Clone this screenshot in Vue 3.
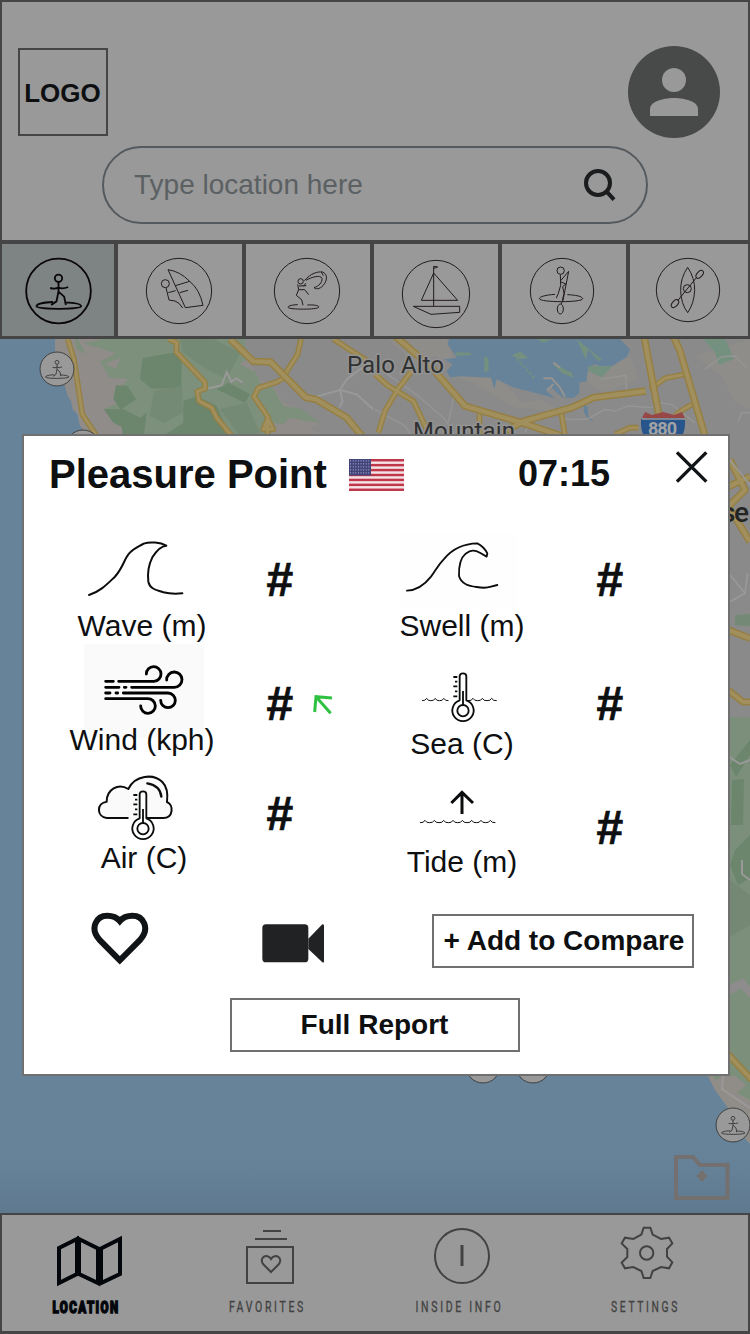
<script setup>
const left = [
  { id: 'wave', label: 'Wave (m)', box: '24 534 236 75', h: 75, row: 110, top: 19 },
  { id: 'wind', label: 'Wind (kph)', box: '24 644 236 79', h: 79, row: 126, top: 33 },
  { id: 'air', label: 'Air (C)', box: '24 770 236 71', h: 71, row: 110, top: 17 }
]
const right = [
  { id: 'swell', label: 'Swell (m)', box: '374 534 176 75', h: 75, row: 110, top: 19 },
  { id: 'sea', label: 'Sea (C)', box: '374 644 176 83', h: 83, row: 126, top: 33 },
  { id: 'tide', label: 'Tide (m)', box: '374 770 176 75', h: 75, row: 110, top: 31 }
]
const stripes = [0, 2, 4, 6, 8, 10, 12]
const stars = Array.from({ length: 40 }, (_, i) => ({ x: 1.6 + (i % 8) * 2.6, y: 1.8 + Math.floor(i / 8) * 3 }))
const ripple = (n) => 'M0 9 ' + Array.from({ length: n }, () => 'q10 1 14 -7 q4 8 14 7').join(' ')
</script>

<template>
  <div class="screen">
    <svg class="defs" width="0" height="0">
      <symbol id="surfer" viewBox="0 0 200 200" overflow="visible">
        <circle cx="100" cy="100" r="97" />
        <circle cx="100" cy="62" r="11" />
        <path d="M100 73V102M75 91Q90 95 100 90Q113 95 129 88M100 101L94 131L78 142M100 102L117 117L122 142M84 133C58 134 34 139 34 146C34 156 168 156 168 146C168 139 145 135 119 134" />
      </symbol>
      <symbol id="thermometer" viewBox="0 0 80 160" overflow="visible">
        <path d="M25 86V14Q25 5 35 5Q45 5 45 14V86A32 32 0 1 1 25 86Z" />
        <circle cx="35" cy="117" r="17" />
        <path d="M35 58V101M6 16H18M11 30H18M6 44H18M11 59H18M6 74H18" />
      </symbol>
    </svg>

    <header class="header">
      <div class="top-row">
        <div class="logo">LOGO</div>
        <svg class="avatar" viewBox="0 0 92 92">
          <circle cx="46" cy="46" r="46" fill="#484949" />
          <circle cx="46" cy="34" r="12" fill="#999" />
          <path d="M22 70V63C22 56 34 52 46 52S70 56 70 63V70Z" fill="#999" />
        </svg>
      </div>
      <div class="search">
        <span>Type location here</span>
        <svg width="32" height="32" viewBox="0 0 96 96" fill="none" stroke="#1b1c1d" stroke-width="12">
          <circle cx="42" cy="42" r="36" /><path d="M68 68L90 92" />
        </svg>
      </div>
    </header>

    <nav class="tabs">
      <div class="tab first active">
        <svg viewBox="6 24 336 276" fill="none" stroke="#0a0708" stroke-width="5.500">
          <use href="#surfer" x="75.500" y="65" width="200" height="200" />
        </svg>
      </div>
      <div class="tab">
        <svg viewBox="354 24 372 276" fill="none" stroke="#231c1e" stroke-width="3">
          <circle cx="537" cy="165" r="98" />
          <circle cx="496" cy="143" r="12" />
          <path d="M504 101L556 215L609 208Q599 160 569 136Q540 106 504 101ZM526 149L569 136M498 155L507 192L525 195Q539 200 548 216M505 170L527 164M539 170L564 163" />
        </svg>
      </div>
      <div class="tab">
        <svg viewBox="738 24 372 276" fill="none" stroke="#231c1e" stroke-width="3">
          <circle cx="921" cy="165" r="98" />
          <circle cx="902" cy="136" r="8" />
          <path d="M913 134C932 112 953 106 968 108C984 115 982 134 969 149C959 160 946 160 942 155C957 150 967 140 966 127C961 115 933 124 918 133M964 108L970 119M893 145L896 161H914L926 176M897 150L919 149M896 161L889 178L905 191L909 208M917 142L911 151M893 206C870 207 864 211 864 214C866 221 954 222 957 213C955 208 942 206 922 207" />
        </svg>
      </div>
      <div class="tab">
        <svg viewBox="-3 24 372 276" fill="none" stroke="#231c1e" stroke-width="3">
          <circle cx="183" cy="174" r="101" />
          <path d="M176 211V91L188 93L176 97M176 111L139 193H248ZM115 211H254V229L168 235Z" />
        </svg>
      </div>
      <div class="tab">
        <svg viewBox="381 24 372 276" fill="none" stroke="#231c1e" stroke-width="3">
          <ellipse cx="561" cy="165" rx="95" ry="98" />
          <circle cx="557" cy="104" r="11" />
          <path d="M556 116L557 148L550 172L544 186M557 134L581 106L564 193M558 138L573 144L563 152L567 172L562 194M540 175C512 177 493 182 493 188C495 200 623 200 623 188C622 181 602 177 577 176" />
          <ellipse cx="556" cy="219" rx="9" ry="15" />
          <path d="M564 193L558 204" />
        </svg>
      </div>
      <div class="tab">
        <svg viewBox="765 24 354 276" fill="none" stroke="#231c1e" stroke-width="3">
          <circle cx="939" cy="162" r="95" />
          <path d="M938 94Q960 126 959 164Q957 203 938 230Q918 203 917 164Q916 126 938 94ZM908 194L965 124" />
          <circle cx="937" cy="158" r="12" />
          <ellipse cx="974" cy="115" rx="8" ry="14" transform="rotate(42 974 115)" />
          <ellipse cx="900" cy="203" rx="8" ry="14" transform="rotate(42 900 203)" />
        </svg>
      </div>
    </nav>

    <svg class="map" viewBox="0 339 750 874" preserveAspectRatio="none">
      <defs>
        <linearGradient id="dusk" x1="0" y1="0" x2="0" y2="1">
          <stop offset="0" stop-color="#607b90" stop-opacity="0" />
          <stop offset="1" stop-color="#5f7a8f" />
        </linearGradient>
      </defs>
      <rect y="339" width="750" height="874" fill="#67839a" />
      <g transform="translate(0 236) scale(.333333)">
        <path fill="#8f8c89" d="M165 309H1200V700H300L280 620L240 570L232 535L218 520L213 495L203 480L195 450L165 400Z" />
        <path fill="#7c907b" d="M225 309H735L742 370L720 385L778 415V440L815 450L850 510L905 518L962 562L870 545L850 565L820 560L780 610H375L312 520L355 500L340 480L365 450L385 430L330 425L300 375L230 340Z" />
        <path fill="#8f8c89" d="M232 309H310L250 322L348 352L304 376L260 356ZM313 382L362 367L346 399ZM345 600L330 548L372 545L385 610Z" />
        <path fill="#6b866c" d="M428 366L520 350L545 365L544 455L455 458L420 430ZM348 448L382 449L408 490L362 521L340 488ZM312 520L370 520L420 545L440 530L430 610H370L365 572L340 560ZM550 495L590 480L650 510L690 600H490L550 560ZM650 460L685 440L750 475L735 500Z" />
        <path fill="#748a74" d="M462 465L545 450L548 530L490 560L450 540ZM540 309H640L720 350L680 430L620 400L550 350ZM660 520L740 500L780 590L720 600Z" />
        <path fill="#8a8a8a" d="M735 309H1200V610H1000L930 580L962 562L905 518L850 500L820 450L778 430L742 365Z" />
        <g fill="none" stroke="#999" stroke-width="6">
          <path d="M620 458L665 448L680 408L694 437L708 427L728 439M945 483L1020 462L1040 430L1120 370M1020 462L1028 495L1018 515M1020 462L1070 475L1125 525" />
        </g>
        <g class="roads">
          <path id="r1" d="M203 309L222 370L247 535L290 600M505 309L530 320L529 348L614 438L616 458L592 466L597 495L635 515L650 545L695 600M903 309L893 355L845 430L830 438L775 456L762 482L805 545L790 580L820 580L803 548L803 600M1000 309L1125 390" />
          <path id="r2" d="M690 309L760 376L812 378L918 485L948 490L1040 545L1090 605" />
        </g>
        <use href="#r1" class="edge" /><use href="#r1" class="core" />
        <use href="#r2" class="edge big" /><use href="#r2" class="core big" />
      </g>
      <g transform="translate(375 236) scale(.333333)">
        <path fill="#8a8a8a" d="M-5 309H1130V2380H-5Z" />
        <path fill="#8f8d8a" d="M40 309H215L235 380L180 360L130 390ZM235 420L350 400L440 500L500 490L600 560L500 520L420 515L300 445ZM635 400L760 340L790 430L690 470L640 440ZM960 360L1125 309V520L1080 500L1040 420Z" />
        <path fill="#67839a" d="M222 309H735L765 340L757 362L712 390L680 394L660 385L640 394L634 436L612 440L614 470L596 486L565 485L545 470L530 455L515 466L540 487L470 468L420 456L365 430L358 460L348 425L260 421L225 424L215 405L233 385L207 370L245 365L228 340L218 325ZM625 505L638 512L640 540L655 558L640 548L627 530Z" />
        <path fill="#74907f" d="M242 349L288 350V358L242 359ZM328 360L340 366L341 403L328 410ZM410 359L435 346L460 366L435 370ZM485 310H532L505 320ZM605 309L680 370L670 376L640 340L632 370ZM640 390L712 390L681 424L640 405ZM530 380L590 410L595 425L560 410ZM985 309H1050L1077 368L1032 388L1020 350Z" />
        <path fill="none" stroke="#74907f" stroke-width="5" stroke-dasharray="9 5" d="M425 368L480 428" />
        <path fill="none" stroke="#95938f" stroke-width="6" d="M505 427H530L555 455L570 483M516 463L535 445M535 380L555 395" />
        <g fill="none" stroke="#969696" stroke-width="4">
          <path d="M30 410L130 480L210 550L240 600M235 487L220 560M0 520L90 570L110 600M565 550H635L690 520L720 525L760 510L830 515L850 500L890 505L960 560M675 430L752 418L755 465M990 400L1040 362L1080 360L1115 395M1090 555L1100 530H1125M450 590L465 560" />
        </g>
        <g id="r3" fill="none">
          <path d="M0 415L40 450L115 495L160 590M110 405L68 460L30 525L10 590M313 535L315 605M558 525L570 600M825 460L870 427L930 415M950 505L910 530L880 560M790 575H765L720 595" />
        </g>
        <use href="#r3" class="edge" /><use href="#r3" class="core" />
        <g id="r4" fill="none">
          <path d="M60 300L170 395L270 510L440 560L560 600M808 305L852 540M895 300L915 345L990 600M380 590L445 556L590 515L655 485L812 465" />
        </g>
        <use href="#r4" class="edge big" /><use href="#r4" class="core big" />
      </g>
      <g class="city">
        <text x="347" y="372.500" textLength="97">Palo Alto</text>
        <text x="413" y="439" textLength="102">Mountain</text>
      </g>
      <path fill="#28568c" d="M641 419Q663 414 685 419Q686 438 674 444H652Q640 438 641 419Z" />
      <path fill="#984747" d="M645 412L652 415L663 412L674 415L682 412L685 418H642Z" />
      <path stroke="#999" stroke-width="1.500" d="M642 419H685" />
      <text class="shield" x="648" y="435" textLength="29">880</text>

      <g transform="translate(375 430) scale(.333333)">
        <g id="r5" fill="none">
          <path d="M1065 90L1110 180L1060 230L1125 335M1060 170L1125 140M1060 600L1125 625" />
        </g>
        <use href="#r5" class="edge big" /><use href="#r5" class="core big" />
        <path fill="none" stroke="#999" stroke-width="5" d="M1065 90L1125 165M1065 435L1110 490L1065 515M1110 490L1118 430" />
        <path fill="#748a77" d="M1080 555L1125 552V588L1080 585Z" />
      </g>
      <text class="jose" x="721" y="522" textLength="28">se</text>
      <path fill="#7b8f7b" d="M700 717H750V1090L730 1078L715 1060Z" />
      <path fill="#6b866c" d="M732 780L744 779L743 825H731ZM735 850L750 835V878L738 885L730 865ZM730 765L750 740V755L736 777Z" />
      <path fill="#758874" d="M730 880L750 895V925L730 937Z" />
      <path fill="none" stroke="#999" stroke-width="2" d="M728 756L740 764L750 760M742 860V874L750 880" />
      <path fill="none" stroke="#8e8c8c" stroke-width="8" d="M726 992L742 983L752 995" />
      <path id="r6" fill="none" d="M728 690L743 702H752M724 1050L752 1080" />
      <use href="#r6" class="edge small" /><use href="#r6" class="core small" />
      <path fill="#908d89" d="M708 1076H735L750 1088V1144L742 1135L728 1108L715 1090Z" />
      <path fill="#7b8f7b" d="M713 1076H722L716 1080ZM737 1093L750 1082V1100Z" />
      <path fill="none" stroke="#999" stroke-width="2" d="M723 1076L722 1089L750 1108" />
      <rect y="1150" width="750" height="63" fill="url(#dusk)" />

      <g fill="#999" stroke="#3c3c3c" stroke-width="5.500">
        <g id="pin">
          <use href="#surfer" x="39.500" y="351.500" width="35" height="35" />
        </g>
        <use href="#pin" x="26" y="78" />
        <use href="#pin" x="426" y="697" />
        <use href="#pin" x="476" y="697" />
        <use href="#pin" x="676" y="756" />
      </g>
      <path fill="none" stroke="#74706f" stroke-width="4" d="M676 1157H693L700 1165H727.500V1198H676ZM702 1171V1181M697 1176H707" />
    </svg>

    <footer class="nav">
      <svg width="174" height="116" viewBox="2 1215 174 116">
        <path fill="none" stroke="#03070b" stroke-width="4" d="M59 1248L77 1239V1274L59 1283ZM79 1239L98 1248.500V1283L79 1274ZM101 1248.500L120 1239V1274L101 1283Z" />
        <text class="current" x="52.500" y="1312.500" textLength="67" lengthAdjust="spacingAndGlyphs">LOCATION</text>
      </svg>
      <svg width="184" height="116" viewBox="176 1215 184 116">
        <path fill="none" stroke="#424242" stroke-width="2" d="M263 1231H281M255 1239H287M247 1247H293V1283H247ZM271 1272L263.500 1264.500C258 1258 267 1252.500 271 1259C275 1252.500 284 1258 278.500 1264.500Z" />
        <text x="229" y="1312" textLength="77" lengthAdjust="spacingAndGlyphs">FAVORITES</text>
      </svg>
      <svg width="192" height="116" viewBox="360 1215 192 116">
        <circle cx="462" cy="1256" r="27" fill="none" stroke="#424242" stroke-width="2" />
        <path stroke="#424242" stroke-width="3" d="M462 1245V1266" />
        <text x="415.500" y="1312" textLength="88" lengthAdjust="spacingAndGlyphs">INSIDE INFO</text>
      </svg>
      <svg width="196" height="116" viewBox="552 1215 196 116">
        <g transform="translate(375 1200) scale(.333333)" fill="none" stroke="#424242" stroke-width="6">
          <path d="M806 83H826L833 104L858 117L882 113L892 130L876 147V170L892 187L882 205L858 201L833 213L826 234H806L799 213L775 201L750 205L740 188L757 171V147L740 130L750 113L775 117L799 104Z" />
          <circle cx="815" cy="159" r="20" />
        </g>
        <text x="611" y="1312" textLength="69" lengthAdjust="spacingAndGlyphs">SETTINGS</text>
      </svg>
    </footer>

    <section class="modal">
      <div class="modal-head">
        <h1>Pleasure Point</h1>
        <svg class="flag" width="55" height="32" viewBox="0 0 55 32">
          <rect width="55" height="32" fill="#f4e3e6" />
          <rect v-for="s in stripes" :key="s" :y="s * 2.4615" width="55" height="2.460" fill="#c0374b" />
          <rect width="22" height="16.500" fill="#42447c" />
          <circle v-for="(s, i) in stars" :key="'s' + i" :cx="s.x" :cy="s.y" r=".600" fill="#b4b5cf" />
        </svg>
        <time>07:15</time>
        <svg class="close" width="32" height="32" viewBox="0 0 96 96" stroke="#111416" stroke-width="10">
          <path d="M3 4L91 92M91 4L3 92" />
        </svg>
      </div>

      <div class="metrics">
        <div v-for="(col, c) in [left, right]" :key="c" :class="c ? 'col right' : 'col'">
          <div v-for="m in col" :key="m.id" :class="['metric', m.id]" :style="{ height: m.row + 'px' }">
            <div class="name">
              <svg :viewBox="m.box" :height="m.h" width="100%" fill="none" stroke="#0b0c0d" stroke-width="6" stroke-linecap="round" stroke-linejoin="round">
                <g v-if="m.id === 'wave'" transform="translate(20 430) scale(.333333)">
                  <path d="M207 495C240 485 262 462 284 441C310 412 312 388 327 371C342 354 358 349 371 341C390 334 421 337 439 347C420 348 407 366 397 382C386 404 382 430 385 455C390 478 410 480 430 487Q455 493 487 490" />
                </g>
                <g v-else-if="m.id === 'swell'" transform="translate(375 430) scale(.333333)" stroke-width="5.500">
                  <rect x="77" y="305" width="350" height="230" fill="#fefefe" stroke="none" />
                  <path d="M96 482C125 481 150 463 168 440C185 417 187 408 208 386C235 353 267 341 307 340Q327 350 337 370L335 380L316 369C298 359 288 360 272 371C255 385 251 408 252 438C259 463 282 468 305 471Q331 476 348 470L367 465" />
                </g>
                <g v-else-if="m.id === 'wind'" transform="translate(20 640) scale(.333333)" stroke="#000" stroke-width="8.500">
                  <rect x="192" y="12" width="360" height="282" fill="#fafafa" stroke="none" />
                  <path d="M257 124H280M296 124H402A22 22 0 1 0 379 102M257 142H297M313 142H318M335 142H463A23 23 0 1 0 440 120M257 159H270M288 159H293M310 159H444A22 22 0 1 1 422 181M257 176H383A22 22 0 1 1 362 198" />
                </g>
                <g v-else-if="m.id === 'air'" transform="translate(20 640) scale(.333333)">
                  <path fill="#fafafa" d="M324 534H260C230 530 228 490 260 485C260 449 294 428 325 447C345 405 400 400 427 426C442 441 444 462 441 486C462 495 460 534 430 534H380" />
                  <path stroke-width="7" d="M382 430Q421 437 424 470" />
                  <rect x="326" y="455" width="50" height="85" fill="#fafafa" stroke="none" />
                  <use href="#thermometer" x="334" y="449" width="80" height="160" fill="#fff" stroke-width="5.500" stroke-linecap="butt" />
                </g>
                <g v-else-if="m.id === 'sea'" transform="translate(375 640) scale(.333333)">
                  <g stroke-width="3"><path transform="translate(142 173) scale(.92 1)" :d="ripple(3)" /><path transform="translate(280 173)" :d="ripple(3)" /></g>
                  <use href="#thermometer" x="229" y="95" width="80" height="160" fill="#fff" stroke-width="5.500" stroke-linecap="butt" />
                </g>
                <g v-else transform="translate(375 640) scale(.333333)">
                  <path stroke-width="3" transform="translate(136 539)" :d="ripple(8)" />
                  <path stroke-width="9" stroke-linecap="butt" stroke-linejoin="miter" d="M261 522V458M229 489L261 457L294 489" />
                </g>
              </svg>
              <span class="label">{{ m.label }}</span>
            </div>
            <div class="value" :style="{ marginTop: m.top + 'px' }">
              #
              <svg v-if="m.id === 'wind'" width="20" height="20" viewBox="0 0 60 60" fill="none" stroke="#2fc142" stroke-width="9">
                <path d="M57 12L9 8L5 54M9 8L53 58" />
              </svg>
            </div>
          </div>
        </div>
      </div>

      <div class="actions">
        <svg width="58" height="54" viewBox="212 97 174 162" fill="none" stroke="#111416" stroke-width="18">
          <path d="M298.500 242L237 180C207 145 228 108 261 108Q285 108 298.500 124Q312 108 336 108C369 108 390 145 360 180Z" />
        </svg>
        <svg class="video" width="63" height="40" viewBox="725 131 189 120" fill="#202224">
          <rect x="726" y="132" width="138" height="114" rx="11" />
          <path d="M864 175L906 132Q911 130 911 137V242Q911 249 906 246L864 206Z" />
        </svg>
        <button class="compare">+ Add to Compare</button>
      </div>
      <button class="report">Full Report</button>
    </section>
  </div>
</template>

<style scoped>
.screen {
  position: relative;
  display: flex;
  flex-direction: column;
  width: 750px;
  height: 1334px;
  overflow: hidden;
  background: #999;
  color: #0d0f11;
  font-family: "Liberation Sans", Arial, sans-serif;
}
.screen * { box-sizing: border-box; }
.screen svg { display: block; flex: none; }
.defs { position: absolute; }
.header {
  height: 242px;
  flex: none;
  border: 2px solid #454545;
  padding-top: 44px;
}
.top-row {
  display: flex;
  align-items: center;
  justify-content: space-between;
  height: 92px;
  padding: 0 28px 0 16px;
}
.logo {
  width: 90px;
  height: 88px;
  border: 2px solid #454545;
  display: flex;
  align-items: center;
  justify-content: center;
  font-size: 26px;
  font-weight: 700;
  padding: 2px 1px 0 0;
}
.avatar { width: 92px; height: 92px; }
.search {
  width: 546px;
  height: 78px;
  margin: 8px 0 0 100px;
  padding: 0 30px 1px 30px;
  border: 2px solid #555a5e;
  border-radius: 39px;
  display: flex;
  align-items: center;
  justify-content: space-between;
  color: #5b6063;
  font-size: 28px;
}
.tabs { display: flex; flex: none; height: 97px; }
.tab { width: 128px; border: 2px solid #454545; border-bottom-width: 3px; }
.tab.first { width: 116px; }
.tab:last-child { width: 122px; }
.tab.active { background: #7e8383; }
.tab svg { width: 100%; height: 92px; }
.map { width: 750px; height: 874px; }
.edge { fill: none; stroke: #967f42; stroke-width: 17; stroke-linejoin: round; }
.core { fill: none; stroke: #a1905d; stroke-width: 9; stroke-linejoin: round; }
.edge.big { stroke-width: 22; }
.core.big { stroke-width: 13; }
.edge.small { stroke-width: 7; }
.core.small { stroke-width: 4; }
.roads { fill: none; }
.city { font: 24px Roboto, sans-serif; fill: #303131; stroke: #939393; stroke-width: 3px; paint-order: stroke; }
.shield { font: 700 18px Roboto, sans-serif; fill: #a3a3a3; }
.jose { font: 500 28px Roboto, sans-serif; fill: #232424; }
.nav {
  display: flex;
  flex: none;
  height: 121px;
  border: 2px solid #454545;
  border-bottom-width: 3px;
}
.nav svg { overflow: visible; }
.nav text { font: 15.5px Roboto, sans-serif; letter-spacing: 4px; fill: #424242; stroke: #424242; stroke-width: .35px; }
.nav .current { font-weight: 900; font-size: 16px; letter-spacing: 2px; fill: #03070b; stroke: #03070b; stroke-width: 1.5px; }
.modal {
  position: absolute;
  left: 22px;
  top: 434px;
  width: 708px;
  height: 642px;
  border: 2px solid #707070;
  background: #fff;
}
.modal-head { display: flex; align-items: flex-start; height: 98px; padding: 15px 20px 0 25px; }
h1 { margin: 0; font-size: 40px; line-height: 46px; font-weight: 700; white-space: nowrap; width: 278px; }
.flag { margin: 8px 0 0 22px; }
time { margin: 2px 66px 0 auto; font-size: 36px; line-height: 42px; font-weight: 700; }
.metrics { display: flex; height: 376px; }
.col { width: 350px; }
.metric { display: flex; align-items: flex-start; }
.name { width: 236px; display: flex; flex-direction: column; align-items: center; }
.name svg { overflow: visible; }
.right .name { width: 176px; }
.label { position: relative; font-size: 30px; line-height: 34px; white-space: nowrap; }
.air .label { padding-left: 4px; }
.value {
  display: flex;
  align-items: center;
  gap: 20px;
  margin-left: 6.6px;
  font-size: 48px;
  line-height: 54px;
  font-weight: 700;
  -webkit-text-stroke: .7px #0d0f11;
}
.right .value { margin-left: 46.6px; }
.actions { display: flex; align-items: flex-start; height: 88px; padding: 2px 34px 0 67px; }
.video { margin: 12px 0 0 113px; }
button {
  display: block;
  height: 54px;
  padding: 0;
  border: 2px solid #707070;
  background: #fff;
  color: #0d0f11;
  font: 700 28px "Liberation Sans", Arial, sans-serif;
}
.compare { width: 262px; margin: 2px 0 0 auto; padding-left: 2px; }
.report { width: 290px; margin-left: 206px; padding-right: 1px; }
</style>

<style>
body { background: #999; }
</style>
